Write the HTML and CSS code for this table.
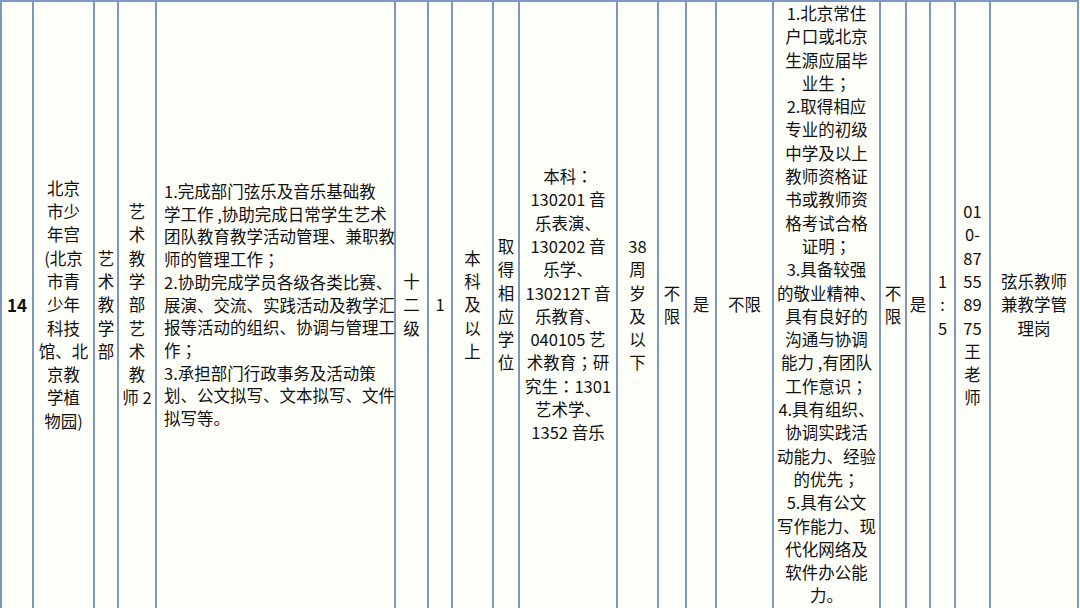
FILE: index.html
```html
<!DOCTYPE html>
<html lang="zh-CN">
<head>
<meta charset="utf-8">
<title>招聘岗位</title>
<link rel="stylesheet" href="styles.css">
</head>
<body>
<table class="grid">
  <colgroup>
    <col class="w32"><col class="w61"><col class="w24"><col class="w38"><col class="w239">
    <col class="w33"><col class="w24"><col class="w41"><col class="w26"><col class="w98">
    <col class="w41"><col class="w28"><col class="w30"><col class="w57"><col class="w107">
    <col class="w26"><col class="w24"><col class="w25"><col class="w35"><col class="w88">
  </colgroup>
  <tr>
    <td class="num">14</td>
    <td>北京<br>市少<br>年宫<br>(北京<br>市青<br>少年<br>科技<br>馆、北<br>京教<br>学植<br>物园)</td>
    <td>艺<br>术<br>教<br>学<br>部</td>
    <td>艺<br>术<br>教<br>学<br>部<br>艺<br>术<br>教<br>师 2</td>
    <td class="desc">1.完成部门弦乐及音乐基础教<br>学工作&nbsp;,协助完成日常学生艺术<br>团队教育教学活动管理、兼职教<br>师的管理工作<span class="pc" lang="zh-TW">；</span><br>2.协助完成学员各级各类比赛、<br>展演、交流、实践活动及教学汇<br>报等活动的组织、协调与管理工<br>作<span class="pc" lang="zh-TW">；</span><br>3.承担部门行政事务及活动策<br>划、公文拟写、文本拟写、文件<br>拟写等。</td>
    <td>十<br>二<br>级</td>
    <td>1</td>
    <td>本<br>科<br>及<br>以<br>上</td>
    <td>取<br>得<br>相<br>应<br>学<br>位</td>
    <td>本科<span class="pc" lang="zh-TW">：</span><br>130201 音<br>乐表演、<br>130202 音<br>乐学、<br>130212T 音<br>乐教育、<br>040105 艺<br>术教育<span class="pc" lang="zh-TW">；</span>研<br>究生<span class="pc" lang="zh-TW">：</span>1301<br>艺术学、<br>1352 音乐</td>
    <td>38<br>周<br>岁<br>及<br>以<br>下</td>
    <td>不<br>限</td>
    <td>是</td>
    <td>不限</td>
    <td>1.北京常住<br>户口或北京<br>生源应届毕<br>业生<span class="pc" lang="zh-TW">；</span><br>2.取得相应<br>专业的初级<br>中学及以上<br>教师资格证<br>书或教师资<br>格考试合格<br>证明<span class="pc" lang="zh-TW">；</span><br>3.具备较强<br>的敬业精神、<br>具有良好的<br>沟通与协调<br>能力&nbsp;,有团队<br>工作意识<span class="pc" lang="zh-TW">；</span><br>4.具有组织、<br>协调实践活<br>动能力、经验<br>的优先<span class="pc" lang="zh-TW">；</span><br>5.具有公文<br>写作能力、现<br>代化网络及<br>软件办公能<br>力。</td>
    <td>不<br>限</td>
    <td>是</td>
    <td>1<br>:<br>5</td>
    <td>01<br>0-<br>87<br>55<br>89<br>75<br>王<br>老<br>师</td>
    <td>弦乐教师<br>兼教学管<br>理岗</td>
  </tr>
</table>
</body>
</html>
```

FILE: styles.css
```css
html, body {
  margin: 0;
  padding: 0;
  background: #fffffa;
}

.grid {
  border-collapse: collapse;
  table-layout: fixed;
  width: 1078px;
  height: 606px;
  font-family: "Noto Sans CJK SC", "Noto Sans", sans-serif;
  font-size: 16.5px;
  line-height: 23.3px;
  color: #111;
  background: #fffffa;
}

.grid td {
  border: 2px solid #7d97c1;
  padding: 0;
  text-align: center;
  vertical-align: middle;
  white-space: nowrap;
  overflow: hidden;
}

.grid td.num {
  font-weight: bold;
  font-size: 17px;
}

.grid td.desc {
  text-align: left;
  padding-left: 7px;
  line-height: 22.7px;
}

.pc {
  font-family: "Noto Sans CJK TC", "Noto Sans CJK SC", sans-serif;
}

.w24 { width: 24px; }
.w25 { width: 25px; }
.w26 { width: 26px; }
.w28 { width: 28px; }
.w30 { width: 30px; }
.w32 { width: 32px; }
.w33 { width: 33px; }
.w35 { width: 35px; }
.w38 { width: 38px; }
.w41 { width: 41px; }
.w57 { width: 57px; }
.w61 { width: 61px; }
.w88 { width: 88px; }
.w98 { width: 98px; }
.w107 { width: 107px; }
.w239 { width: 239px; }
```
